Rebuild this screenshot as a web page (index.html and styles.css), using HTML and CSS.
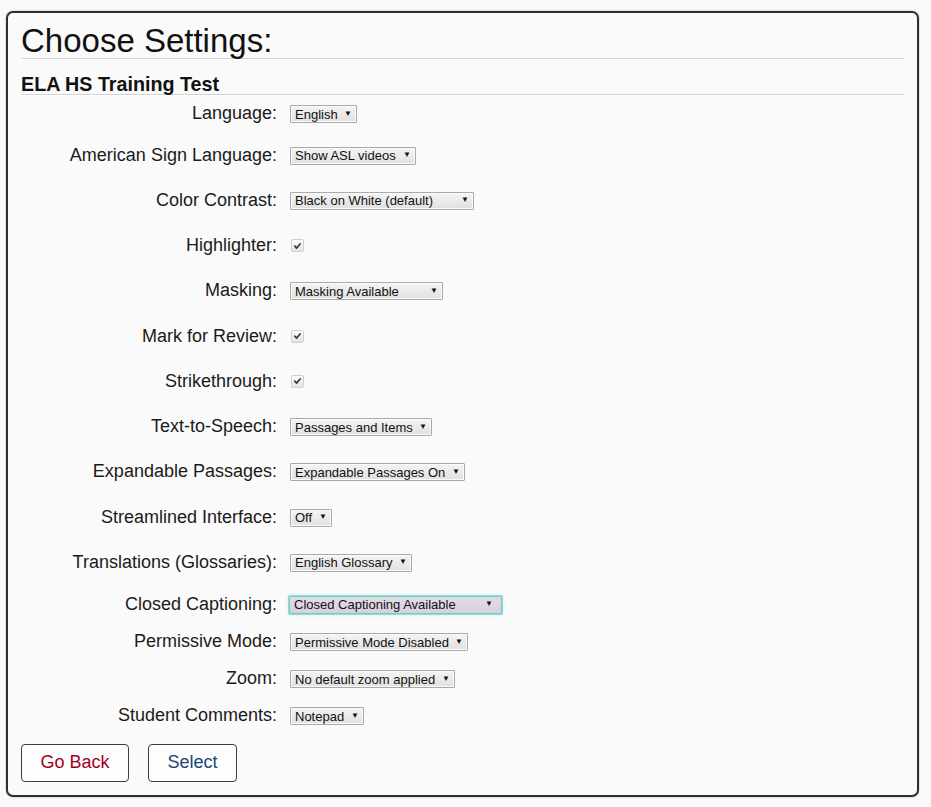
FILE: index.html
```html
<!DOCTYPE html>
<html lang="en">
<head>
<meta charset="utf-8">
<title>Choose Settings</title>
<link rel="stylesheet" href="styles.css">
</head>
<body>
<div class="panel">
  <h1 class="title">Choose Settings:</h1>
  <h2 class="subtitle">ELA HS Training Test</h2>
  <div class="rows">
    <div class="row row-first">
      <label class="label">Language:</label>
      <span class="sel"><select><option>English</option></select></span>
    </div>
    <div class="row">
      <label class="label">American Sign Language:</label>
      <span class="sel"><select><option>Show ASL videos</option></select></span>
    </div>
    <div class="row">
      <label class="label">Color Contrast:</label>
      <span class="sel"><select class="w-color"><option>Black on White (default)</option></select></span>
    </div>
    <div class="row">
      <label class="label">Highlighter:</label>
      <span class="check" role="checkbox" aria-checked="true"><svg viewBox="0 0 12 12" width="12" height="12"><path d="M3 6.2 L5 8.3 L9 3.6" fill="none" stroke="#3a3a3a" stroke-width="1.8" stroke-linecap="round" stroke-linejoin="round"/></svg></span>
    </div>
    <div class="row">
      <label class="label">Masking:</label>
      <span class="sel"><select class="w-mask"><option>Masking Available</option></select></span>
    </div>
    <div class="row">
      <label class="label">Mark for Review:</label>
      <span class="check" role="checkbox" aria-checked="true"><svg viewBox="0 0 12 12" width="12" height="12"><path d="M3 6.2 L5 8.3 L9 3.6" fill="none" stroke="#3a3a3a" stroke-width="1.8" stroke-linecap="round" stroke-linejoin="round"/></svg></span>
    </div>
    <div class="row">
      <label class="label">Strikethrough:</label>
      <span class="check" role="checkbox" aria-checked="true"><svg viewBox="0 0 12 12" width="12" height="12"><path d="M3 6.2 L5 8.3 L9 3.6" fill="none" stroke="#3a3a3a" stroke-width="1.8" stroke-linecap="round" stroke-linejoin="round"/></svg></span>
    </div>
    <div class="row">
      <label class="label">Text-to-Speech:</label>
      <span class="sel"><select><option>Passages and Items</option></select></span>
    </div>
    <div class="row">
      <label class="label">Expandable Passages:</label>
      <span class="sel"><select><option>Expandable Passages On</option></select></span>
    </div>
    <div class="row">
      <label class="label">Streamlined Interface:</label>
      <span class="sel"><select><option>Off</option></select></span>
    </div>
    <div class="row">
      <label class="label">Translations (Glossaries):</label>
      <span class="sel"><select><option>English Glossary</option></select></span>
    </div>
    <div class="row row-cc">
      <label class="label">Closed Captioning:</label>
      <span class="sel sel-focus"><select class="w-cc"><option>Closed Captioning Available</option></select></span>
    </div>
    <div class="row row-short">
      <label class="label">Permissive Mode:</label>
      <span class="sel"><select><option>Permissive Mode Disabled</option></select></span>
    </div>
    <div class="row row-short">
      <label class="label">Zoom:</label>
      <span class="sel"><select><option>No default zoom applied</option></select></span>
    </div>
    <div class="row row-short">
      <label class="label">Student Comments:</label>
      <span class="sel"><select><option>Notepad</option></select></span>
    </div>
  </div>
  <div class="actions">
    <button class="btn btn-back">Go Back</button>
    <button class="btn btn-select">Select</button>
  </div>
</div>
</body>
</html>
```
FILE: styles.css
```css
html, body {
  margin: 0;
  padding: 0;
  background: #f9f9f9;
}
body {
  padding: 11px 12px 10px 6px;
  font-family: "Liberation Sans", Arial, sans-serif;
  color: #111;
}
.panel {
  box-sizing: border-box;
  width: 913px;
  height: 786px;
  border: 2px solid #2f2f2f;
  border-radius: 7px;
  background: #fafafa;
  padding: 11px 13px 0 13px;
  box-shadow: 0 0 0 1px #e2e2e2;
}
.title {
  margin: 0;
  font-size: 33px;
  font-weight: normal;
  line-height: 34px;
  border-bottom: 1px solid #d2d2d2;
  box-shadow: 0 1px 0 #fff;
  color: #111;
}
.subtitle {
  margin: 15px 0 0 0;
  font-size: 19.7px;
  font-weight: bold;
  line-height: 20px;
  border-bottom: 1px solid #d2d2d2;
  box-shadow: 0 1px 0 #fff;
  color: #111;
}
.rows {
  display: flex;
  flex-direction: column;
}
.row {
  display: flex;
  align-items: center;
  height: 45.25px;
}
.row-first {
  height: 37.5px;
}
.row-short {
  height: 37px;
}
.row-cc {
  height: 38px;
}
.label {
  width: 256px;
  text-align: right;
  font-size: 18px;
  color: #1a1a1a;
  margin-right: 13px;
}
.sel {
  position: relative;
  display: inline-block;
  height: 18px;
}
.sel select {
  -webkit-appearance: none;
  appearance: none;
  box-sizing: border-box;
  height: 18px;
  margin: 0;
  padding: 0 18px 0 4px;
  font-family: "Liberation Sans", Arial, sans-serif;
  font-size: 13px;
  color: #111;
  border: 1px solid #a9a9a9;
  border-radius: 1px;
  background: linear-gradient(#f4f4f4, #e0e0e0);
  box-shadow: inset 0 0 0 1px #fbfbfb;
  outline: none;
}
.sel::after {
  content: "\25BC";
  position: absolute;
  right: 5px;
  top: 3px;
  font-size: 8px;
  line-height: 12px;
  color: #111;
  pointer-events: none;
}
.w-color { width: 184px; }
.w-mask { width: 153px; }
.w-cc { width: 213px; }
.sel-focus::after {
  right: 9px;
}
.sel-focus select {
  background: linear-gradient(#e2dbe8, #d7d1de);
  border-color: #7fc5bf;
  box-shadow: 0 0 0 1px #8fe0d8, 0 0 3px 1px #b7f3ee;
  margin-left: -1px;
}
.check {
  box-sizing: border-box;
  display: inline-flex;
  align-items: center;
  justify-content: center;
  width: 13px;
  height: 13px;
  margin-left: 1px;
  border: 1px solid #d0d0d0;
  border-radius: 2px;
  background: linear-gradient(#fdfdfd, #e4e4e4);
}
.check svg {
  display: block;
}
.actions {
  display: flex;
  gap: 19px;
  margin-top: 9.5px;
}
.btn {
  box-sizing: border-box;
  height: 38px;
  padding: 0 18.5px;
  font-family: "Liberation Sans", Arial, sans-serif;
  font-size: 18px;
  background: #fdfdfd;
  border: 1px solid #3d3d3d;
  border-radius: 4px;
}
.btn-back {
  color: #a3001c;
}
.btn-select {
  color: #1b4574;
}
```
